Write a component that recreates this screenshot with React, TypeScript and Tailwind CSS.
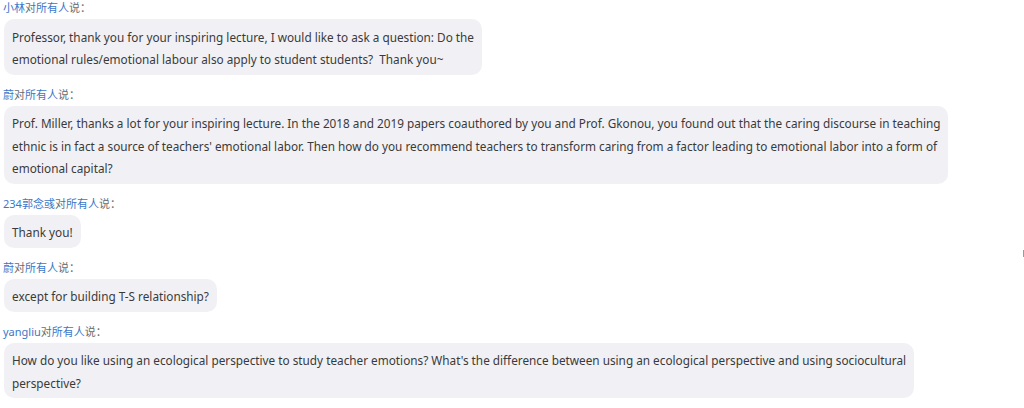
import React from "react";

type Msg = { name: string; lines: string[] };

const msgs: Msg[] = [
  {
    name: "小林",
    lines: [
      "Professor, thank you for your inspiring lecture, I would like to ask a question: Do the",
      "emotional rules/emotional labour also apply to student students?  Thank you~",
    ],
  },
  {
    name: "蔚",
    lines: [
      "Prof. Miller, thanks a lot for your inspiring lecture. In the 2018 and 2019 papers coauthored by you and Prof. Gkonou, you found out that the caring discourse in teaching",
      "ethnic is in fact a source of teachers' emotional labor. Then how do you recommend teachers to transform caring from a factor leading to emotional labor into a form of",
      "emotional capital?",
    ],
  },
  { name: "234郭念彧", lines: ["Thank you!"] },
  { name: "蔚", lines: ["except for building T-S relationship?"] },
  {
    name: "yangliu",
    lines: [
      "How do you like using an ecological perspective to study teacher emotions? What's the difference between using an ecological perspective and using sociocultural",
      "perspective?",
    ],
  },
];

export default function App() {
  return (
    <div
      className="relative w-[1024px] h-[408px] overflow-hidden bg-white"
      style={{ fontFamily: '"Noto Sans", "Noto Sans CJK SC", sans-serif' }}
    >
      <div className="flex flex-col gap-[12px] pl-[4px]">
        {msgs.map((m, i) => (
          <div key={i} className="flex flex-col items-start">
            <div className="text-[11px] leading-[16px] -ml-[1px] whitespace-nowrap">
              <span className="text-[#3b77c9]">{m.name}</span>
              <span className="text-[#6b6b6b]">对</span>
              <span className="text-[#3b77c9]">所有人</span>
              <span className="text-[#6b6b6b]">说：</span>
            </div>
            <div className="mt-[3px] rounded-[10px] bg-[#f1f1f5] px-[8px] pt-[6.5px] pb-[4px] text-[11.78px] leading-[22.5px] text-[#3a3a3a]">
              {m.lines.map((l, j) => (
                <div key={j} className="whitespace-pre">
                  {l}
                </div>
              ))}
            </div>
          </div>
        ))}
      </div>
      <div className="absolute right-0 top-[250px] h-[7px] w-[1px] bg-[#9a9a9a]" />
    </div>
  );
}
